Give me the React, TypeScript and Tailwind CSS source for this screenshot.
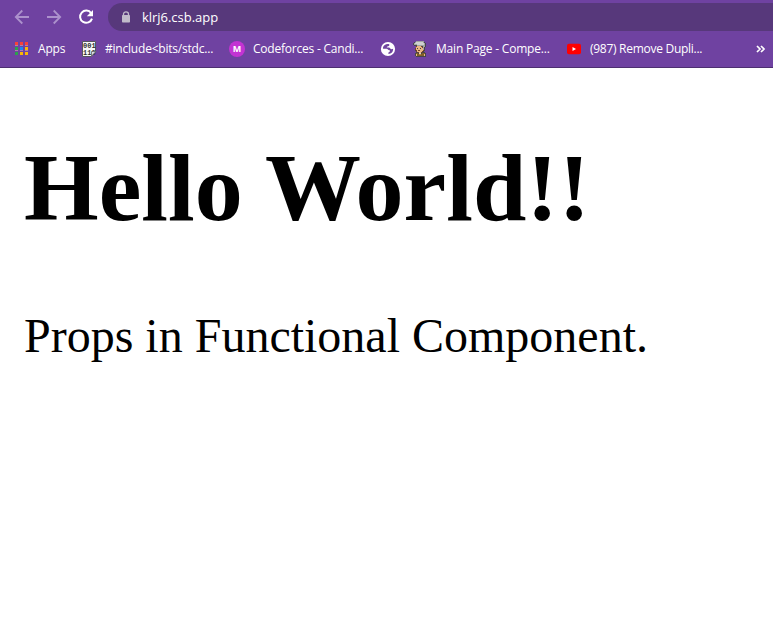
import React from "react";

const NavArrow = ({ flip = false }: { flip?: boolean }) => (
  <svg width="16" height="16" viewBox="0 0 16 16" className={flip ? "rotate-180" : ""} fill="none" stroke="#ac91cc" strokeWidth="1.8">
    <path d="M15 8H2M8.3 1.5L1.8 8l6.5 6.5" />
  </svg>
);

const Reload = () => (
  <svg width="16" height="16" viewBox="0 0 16 16" fill="none">
    <path d="M13.2 4.2A6.1 6.1 0 1 0 14 9.6" stroke="#fff" strokeWidth="2" />
    <path d="M15 1v6.2H8.8z" fill="#fff" />
  </svg>
);

const Lock = () => (
  <svg width="10" height="12" viewBox="0 0 10 12">
    <path d="M2.5 5V3a2.5 2.2 0 0 1 5 0v2" fill="none" stroke="#c1bbca" strokeWidth="1.3" />
    <rect x="1" y="4" width="8" height="7.5" rx="0.8" fill="#c1bbca" />
  </svg>
);

const AppsIcon = () => {
  const colors = ["#f7403a", "#f7403a", "#f7403a", "#2ba24c", "#1e88f5", "#fbb505", "#2ba24c", "#fbb505", "#fbb505"];
  return (
    <svg width="14" height="14" viewBox="0 0 14 14" shapeRendering="crispEdges">
      {colors.map((c, i) => (
        <rect key={i} x={(i % 3) * 5 + 1} y={Math.floor(i / 3) * 5} width="3" height="3" fill={c} />
      ))}
      {[0, 1, 2, 3, 4, 5].map((i) => (
        <rect key={i} x={(i % 3) * 5 + 1} y={Math.floor(i / 3) * 5 + 3} width="3" height="1" fill="#ae80ad" />
      ))}
    </svg>
  );
};

const BinaryPage = () => (
  <svg width="16" height="16" viewBox="0 0 16 16">
    <path d="M1.5.5h13v10l-4 5h-9z" fill="#f7f7f7" stroke="#56565e" />
    <text x="2" y="6.9" fontFamily="Liberation Mono" fontWeight="700" fontSize="7" fill="#303030">001</text>
    <text x="2" y="13.9" fontFamily="Liberation Mono" fontWeight="700" fontSize="7" fill="#303030">110</text>
    <path d="M10.5 15v-4.5H15z" fill="#d8dce0" stroke="#62646a" strokeWidth=".8" />
  </svg>
);

const Globe = () => (
  <svg width="16" height="16" viewBox="0 0 16 16">
    <circle cx="8" cy="8" r="7.1" fill="#fff" />
    <path
      d="M9.4 3.4C7 2.3 3.6 3.8 3 6.4c-.2.9 0 1.4.6 1.4h3c1.2 0 1.4 1.5 2.8 1.5.8 0 .8 1 .2 1.4-.9.4-1.5 1-1.1 2.4 2.8-.3 4.8-2.2 4.6-5.3-1 .5-2 .5-2.6-.1-.7-.7-1-1.1-2-1.1H6.8c0-1.1.8-1.2 1.4-1.4.8-.2 1.2-.8 1.2-1.8z"
      fill="#7045a0"
    />
  </svg>
);

/* One character per pixel; the palette below gives each its colour. */
const portrait = [
  "...gggggggg...",
  ".dgwwwwwwwgd..",
  "dgwwwwwwwwwgd.",
  "dgggwwwwwwwgd.",
  ".dddggggggggd.",
  "...ksssskdggd.",
  "...sssssskgd..",
  "..ksdssdssgd..",
  "..ksssssssgd..",
  "..dkskkssskd..",
  "...kssssskd...",
  "...ddksskddd..",
  "..dbbdwwdbbbd.",
  "..dsbbrrbbbsd.",
  "..dsbbbbbbbsd.",
  "...dddddddddd.",
];
const palette: Record<string, string> = {
  d: "#46464a", w: "#cfd1d0", g: "#a0a3a2", k: "#754429", s: "#eab583", b: "#806028", r: "#c3823a",
};
const Portrait = () => (
  <svg width="16" height="16" viewBox="-1 0 16 16" shapeRendering="crispEdges">
    {portrait.flatMap((row, y) =>
      [...row].map((p, x) => (p === "." ? null : <rect key={`${x}-${y}`} x={x} y={y} width="1" height="1" fill={palette[p]} />))
    )}
  </svg>
);

const Video = () => (
  <svg width="16" height="16" viewBox="0 0 16 16">
    <rect x="1" y="2.7" width="14" height="10.6" rx="2" fill="#ff0000" />
    <path d="M6.5 6v4l3.5-2z" fill="#fff" />
  </svg>
);

export default function App() {
  return (
    <div className="flex h-[622px] w-[773px] flex-col overflow-hidden bg-white text-black">
      <header className="h-[68px] shrink-0 border-b border-[#4d2f70] bg-[#6f42a1] font-['Open_Sans',sans-serif] text-white">
        <div className="flex h-[34px] items-center pl-[14px]">
          <NavArrow />
          <div className="ml-4 flex"><NavArrow flip /></div>
          <div className="ml-4 flex"><Reload /></div>
          <div className="ml-[14px] flex h-7 flex-1 items-center rounded-l-full bg-[#57387b] pl-[13px]">
            <Lock />
            <span className="ml-[11px] text-[13px] leading-5 tracking-[-0.03px]">klrj6.csb.app</span>
          </div>
        </div>
        <nav className="flex h-[30px] items-center whitespace-nowrap pl-[14px] text-[12px] leading-4">
          <div className="flex w-[67px] items-center">
            <AppsIcon />
            <span className="ml-[10px] tracking-[-0.2px]">Apps</span>
          </div>
          <div className="flex w-[148px] items-center">
            <BinaryPage />
            <span className="ml-2 tracking-[-0.21px]">#include&lt;bits/stdc...</span>
          </div>
          <div className="flex w-[151px] items-center">
            <span className="flex size-4 items-center justify-center rounded-full bg-[#c333d3] text-[9px] font-bold">M</span>
            <span className="ml-2 tracking-[-0.22px]">Codeforces - Candi...</span>
          </div>
          <div className="flex w-8"><Globe /></div>
          <div className="flex w-[154px] items-center">
            <Portrait />
            <span className="ml-2 tracking-[-0.2px]">Main Page - Compe...</span>
          </div>
          <div className="flex w-[190px] items-center">
            <Video />
            <span className="ml-2 tracking-[-0.28px]">(987) Remove Dupli...</span>
          </div>
          <svg width="10" height="8" viewBox="0 0 10 8" fill="none" stroke="#fff" strokeWidth="1.7">
            <path d="M1 1l3 3-3 3M5 1l3 3-3 3" />
          </svg>
        </nav>
      </header>
      <main className="px-6 pt-[65px] font-['Liberation_Serif',serif]">
        <h1 className="whitespace-nowrap text-[96px] font-bold leading-[110px]">Hello World!!</h1>
        <p className="mt-[65px] whitespace-nowrap text-[48px] leading-[55px]">Props in Functional Component.</p>
      </main>
    </div>
  );
}
